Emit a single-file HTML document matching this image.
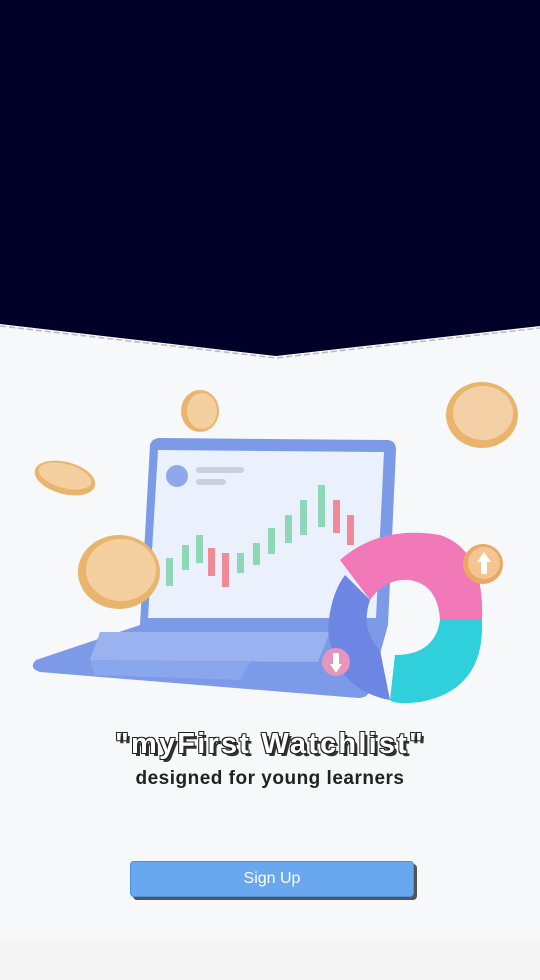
<!DOCTYPE html>
<html><head><meta charset="utf-8"><style>
html,body{margin:0;padding:0;width:540px;height:980px;overflow:hidden;background:#f7f8fa;font-family:"Liberation Sans",sans-serif}
.wrap{position:relative;width:540px;height:980px}
svg{position:absolute;left:0;top:0}
.t1{position:absolute;top:728px;left:0;width:540px;text-align:center;font-size:29px;font-weight:bold;color:#fff;letter-spacing:2.2px;
text-shadow:-1px -1px 0 #222,1px -1px 0 #222,-1px 1px 0 #222,1px 1px 0 #222,3px 3px 0 #333}
.t2{position:absolute;top:768px;left:0;width:540px;text-align:center;font-size:19px;font-weight:bold;color:#222;letter-spacing:0.5px}
.btn{position:absolute;left:130px;top:861px;width:282px;height:34px;background:#69a8ee;border:1px solid #4f8fe0;border-radius:4px;box-shadow:3px 3px 0 #555;color:#fff;font-size:16px;text-align:center;line-height:34px}
.bot{position:absolute;left:0;top:940px;width:540px;height:40px;background:#f4f4f4}
</style></head><body><div class="wrap">
<svg width="540" height="980" viewBox="0 0 540 980">
<polyline points="0,326 276,358 540,328" fill="none" stroke="#bbb" stroke-width="1.5" stroke-dasharray="6,3"/>
<polygon points="0,0 540,0 540,326 276,356 0,324" fill="#000028"/>
<ellipse cx="200" cy="411" rx="19" ry="21" fill="#e9b56d"/><ellipse cx="202" cy="411" rx="15" ry="18" fill="#f4cfa0"/>
<ellipse cx="482" cy="415" rx="36" ry="33" fill="#e9b56d"/><ellipse cx="483" cy="413" rx="30" ry="27" fill="#f4d0a6"/>
<ellipse cx="65" cy="478" rx="31" ry="16" fill="#e9b56d" transform="rotate(15 65 478)"/><ellipse cx="65" cy="476" rx="27" ry="12" fill="#f4cfa0" transform="rotate(15 65 476)"/>
<path d="M150,445 Q152,438 160,438 L388,440 Q396,441 396,450 L388,625 L140,625 Z" fill="#7b9be6"/>
<path d="M158,450 L384,452 L376,618 L148,618 Z" fill="#eaf0fc"/>
<circle cx="177" cy="476" r="11" fill="#8fa8ec"/>
<rect x="196" y="467" width="48" height="6" rx="3" fill="#c9d0e0"/><rect x="196" y="479" width="30" height="6" rx="3" fill="#c9d0e0"/>
<g fill="#8ed8b8">
<rect x="166" y="558" width="7" height="28"/><rect x="182" y="545" width="7" height="25"/><rect x="196" y="535" width="7" height="28"/>
<rect x="237" y="553" width="7" height="20"/><rect x="253" y="543" width="7" height="22"/><rect x="268" y="528" width="7" height="26"/>
<rect x="285" y="515" width="7" height="28"/><rect x="300" y="500" width="7" height="35"/><rect x="318" y="485" width="7" height="42"/></g>
<g fill="#f08a96">
<rect x="208" y="548" width="7" height="28"/><rect x="222" y="553" width="7" height="34"/><rect x="333" y="500" width="7" height="33"/><rect x="347" y="515" width="7" height="30"/></g>
<path d="M140,625 L388,625 L370,690 Q368,698 358,698 L40,672 Q28,668 36,660 Z" fill="#7d9ae8"/>
<path d="M100,632 L330,632 L318,662 L90,660 Z" fill="#9ab2f0"/>
<path d="M90,660 L250,662 L240,680 L95,675 Z" fill="#8aa6ec"/>
<ellipse cx="119" cy="572" rx="41" ry="37" fill="#e9b56d"/><ellipse cx="121" cy="570" rx="35" ry="31" fill="#f4cfa0"/>
<path d="M340,560 Q380,525 440,535 Q485,550 482,620 L440,620 Q438,585 410,580 Q385,578 370,600 Z" fill="#f279b7"/>
<path d="M440,620 L482,620 Q485,690 420,702 Q395,705 390,700 L395,655 Q435,655 440,620 Z" fill="#2fd0dc"/>
<path d="M345,575 L370,600 Q360,630 380,650 L390,700 Q335,690 328,630 Q330,595 345,575 Z" fill="#6d86e4"/>
<circle cx="483" cy="564" r="20" fill="#e9a866"/><circle cx="484" cy="563" r="16" fill="#f4c591"/>
<path d="M484,552 L477,562 L481,562 L481,574 L487,574 L487,562 L491,562 Z" fill="#fff"/>
<circle cx="336" cy="662" r="14" fill="#e695bb"/><path d="M336,673 L330,664 L333,664 L333,653 L339,653 L339,664 L342,664 Z" fill="#fff"/>
</svg>
<div class="t1">"myFirst Watchlist"</div>
<div class="t2">designed for young learners</div>
<div class="btn">Sign Up</div>
<div class="bot"></div>
</div></body></html>
